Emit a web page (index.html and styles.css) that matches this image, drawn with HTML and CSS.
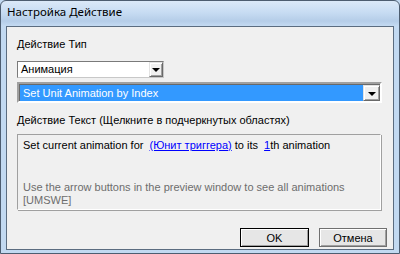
FILE: index.html
```html
<!DOCTYPE html>
<html lang="ru">

<head>
    <meta charset="UTF-8" />
    <title>Настройка Действие</title>
    <link rel="stylesheet" href="styles.css">
</head>

<body>
    <div class="window">
        <div class="titlebar">Настройка Действие</div>
        <div class="client">
            <div class="label">Действие Тип</div>
            <div class="combo short">
                <span class="comboValue">Анимация</span>
                <span class="dropBtn"><span class="tri"></span></span>
            </div>
            <div class="combo wide">
                <span class="comboValue selected">Set Unit Animation by Index</span>
                <span class="dropBtn"><span class="tri"></span></span>
            </div>
            <div class="label second">Действие Текст (Щелкните в подчеркнутых областях)</div>
            <div class="textbox">
                <p class="action">Set current animation for <a class="arg">(Юнит триггера)</a> to its <a class="arg">1</a>th animation</p>
                <p class="hint">Use the arrow buttons in the preview window to see all animations<br>[UMSWE]</p>
            </div>
            <div class="buttons">
                <button class="btn default">OK</button>
                <button class="btn">Отмена</button>
            </div>
        </div>
    </div>
</body>

</html>
```

FILE: styles.css
```css
:root {
    --face: #f0f0f0;
    --frame: #c2d9f1;
    --shadow: #a0a0a0;
    --dark-shadow: #696969;
    --select: #3399ff;
    --link: #0000ff;
    --hint: #6d6d6d;
    --ui-font: 'Liberation Sans', Arial, sans-serif;
}

html,
body {
    margin: 0;
    padding: 0;
    background: var(--frame);
}

.window {
    box-sizing: border-box;
    width: 400px;
    height: 254px;
    display: flex;
    flex-direction: column;
    border: 1px solid #4d5d70;
    border-radius: 6px 6px 0 0;
    padding: 0 5px 3px 5px;
    background: linear-gradient(to bottom, #dbe9f8 0px, #c6dbf2 12px, #b5cde8 20px, #c4daf2 25px, var(--frame) 30px);
}

.titlebar {
    height: 25px;
    padding-left: 1px;
    font-family: 'Noto Sans', sans-serif;
    font-size: 11.5px;
    line-height: 22px;
    color: #000;
}

.client {
    flex: 1;
    box-sizing: border-box;
    background: var(--face);
    border: 1px solid #5b6c80;
    padding: 11px 6px 0 10px;
    font-family: var(--ui-font);
    font-size: 11px;
    line-height: 13px;
    color: #000;
    display: flex;
    flex-direction: column;
}

.label {
    height: 13px;
}

.label.second {
    margin-top: 11px;
}

.combo {
    box-sizing: border-box;
    display: flex;
    background: #fff;
}

.combo.short {
    width: 147px;
    height: 17px;
    margin-top: 10px;
    border: 1px solid #7a7a7a;
    border-right-color: #c8c8c8;
    border-bottom-color: #c8c8c8;
}

.combo.wide {
    width: 365px;
    height: 21px;
    margin-top: 4px;
    border: 2px solid;
    border-color: var(--shadow) #fff #fff var(--shadow);
    box-shadow: inset 1px 1px 0 var(--dark-shadow);
    padding: 1px 0 0 1px;
}

.comboValue {
    flex: 1;
    padding-left: 3px;
    line-height: 15px;
}

.comboValue.selected {
    background: var(--select);
    color: #fff;
    line-height: 16px;
}

.dropBtn {
    box-sizing: border-box;
    width: 14px;
    display: flex;
    align-items: center;
    justify-content: center;
    background: var(--face);
    border: 1px solid;
    border-color: #e3e3e3 var(--dark-shadow) var(--dark-shadow) #e3e3e3;
    box-shadow: inset 1px 1px 0 #fff, inset -1px -1px 0 var(--shadow);
}

.combo.wide .dropBtn {
    width: 17px;
}

.tri {
    width: 0;
    height: 0;
    border-left: 4px solid transparent;
    border-right: 4px solid transparent;
    border-top: 4px solid #000;
    margin-top: 1px;
}

.textbox {
    box-sizing: border-box;
    width: 364px;
    height: 76px;
    margin-top: 7px;
    border: 1px solid var(--shadow);
    border-right-color: #fff;
    border-bottom-color: #fff;
    box-shadow: 1px 1px 0 var(--shadow);
    padding: 4px 5px;
}

.textbox p {
    margin: 0;
}

.arg {
    color: var(--link);
    text-decoration: underline;
    margin-left: 3px;
}

.hint {
    color: var(--hint);
    margin-top: 29px !important;
}

.buttons {
    display: flex;
    justify-content: flex-end;
    gap: 10px;
    margin-top: 18px;
}

.btn {
    box-sizing: border-box;
    width: 69px;
    height: 19px;
    padding: 0;
    font-family: var(--ui-font);
    font-size: 11px;
    color: #000;
    background: #e6e6e6;
    border: 1px solid #707070;
    box-shadow: inset 1px 1px 0 #fff, inset -1px -1px 0 var(--shadow);
}

.btn.default {
    border-color: #000;
}

.btn + .btn {
    width: 68px;
}
```
